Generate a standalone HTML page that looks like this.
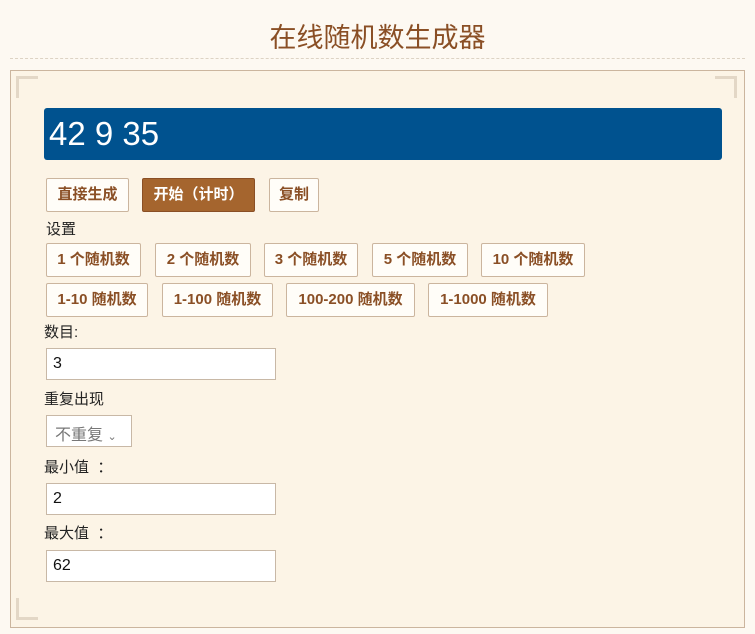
<!DOCTYPE html>
<html><head><meta charset="utf-8"><style>
*{box-sizing:border-box;margin:0;padding:0}
body{width:755px;height:634px;background:#fdf9f2;font-family:"Liberation Sans","Noto Sans CJK SC",sans-serif;position:relative;overflow:hidden;color:#222}
.title{position:absolute;top:16px;left:0;width:755px;text-align:center;font-size:27px;color:#8a4f25}
.dash{position:absolute;top:58px;left:10px;width:735px;border-top:1px dashed #ddd3c4}
.panel{position:absolute;left:10px;top:70px;width:735px;height:558px;background:#fcf4e6;border:1px solid #cbb59e}
.a{position:absolute}
.res{left:44px;top:108px;width:678px;height:52px;background:#00528f;border-radius:3px;color:#fff;font-size:33px;padding:7px 0 0 5px}
.b{position:absolute;height:34px;border:1px solid #cbb59e;background:#fffdf8;color:#8a4f25;font-weight:bold;font-size:15px;text-align:center;line-height:32px;border-radius:2px}
.br{background:#a5652e;color:#fff;border-color:#8a4f25}
.l{position:absolute;font-size:15px;color:#222}
.in{position:absolute;left:46px;width:230px;height:32px;background:#fff;border:1px solid #c8b8a6;font-size:16px;padding:6px 0 0 6px;color:#111}
.c{position:absolute;width:22px;height:22px;border:0 solid #e3d7c6}
</style></head><body>
<div class="title">在线随机数生成器</div>
<div class="dash"></div>
<div class="panel"></div>
<div class="c" style="left:16px;top:76px;border-left-width:3px;border-top-width:3px"></div>
<div class="c" style="left:715px;top:76px;border-right-width:3px;border-top-width:3px"></div>
<div class="c" style="left:16px;top:598px;border-left-width:3px;border-bottom-width:3px"></div>
<div class="a res">42 9 35</div>
<div class="b" style="left:46px;top:178px;width:83px">直接生成</div>
<div class="b br" style="left:142px;top:178px;width:113px">开始（计时）</div>
<div class="b" style="left:269px;top:178px;width:50px">复制</div>
<div class="l" style="left:46px;top:218px">设置</div>
<div class="b" style="left:46px;top:243px;width:95px">1 个随机数</div>
<div class="b" style="left:155px;top:243px;width:96px">2 个随机数</div>
<div class="b" style="left:264px;top:243px;width:94px">3 个随机数</div>
<div class="b" style="left:372px;top:243px;width:96px">5 个随机数</div>
<div class="b" style="left:481px;top:243px;width:104px">10 个随机数</div>
<div class="b" style="left:46px;top:283px;width:102px">1-10 随机数</div>
<div class="b" style="left:162px;top:283px;width:111px">1-100 随机数</div>
<div class="b" style="left:286px;top:283px;width:129px">100-200 随机数</div>
<div class="b" style="left:428px;top:283px;width:120px">1-1000 随机数</div>
<div class="l" style="left:44px;top:321px">数目:</div>
<div class="in" style="top:348px">3</div>
<div class="l" style="left:44px;top:388px">重复出现</div>
<div class="a" style="left:46px;top:415px;width:86px;height:32px;background:#fff;border:1px solid #c8b8a6;font-size:16px;color:#777;padding:5px 0 0 8px">不重复 <span style="font-size:11px">⌄</span></div>
<div class="l" style="left:44px;top:456px">最小值 &nbsp;：</div>
<div class="in" style="top:483px">2</div>
<div class="l" style="left:44px;top:522px">最大值 &nbsp;：</div>
<div class="in" style="top:550px">62</div>
</body></html>
